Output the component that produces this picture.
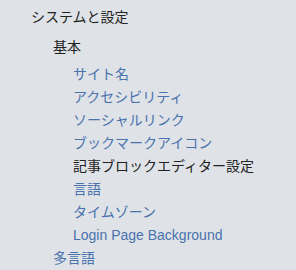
const links = [
    "サイト名",
    "アクセシビリティ",
    "ソーシャルリンク",
    "ブックマークアイコン",
    "記事ブロックエディター設定",
    "言語",
    "タイムゾーン",
    "Login Page Background",
];

// the active page is shown as plain text
const current = "記事ブロックエディター設定";

export default function App() {
    return (
        <div
            className="h-[270px] w-[296px] overflow-hidden bg-[#dfe3e7] text-[14px] leading-[23px] text-[#222]"
            style={{ fontFamily: '"Liberation Sans", "Noto Sans CJK JP", sans-serif' }}
        >
            <div className="pl-[31px] pt-[6px]">
                <p>システムと設定</p>
                <ul className="mt-[7px] pl-[22px]">
                    <li>
                        <p>基本</p>
                        <ul className="mt-[4px] pl-[20px]">
                            {links.map((label) => (
                                <li key={label}>
                                    {label === current ? (
                                        <span>{label}</span>
                                    ) : (
                                        <a href="#" className="text-[#4a72ad]">
                                            {label}
                                        </a>
                                    )}
                                </li>
                            ))}
                        </ul>
                    </li>
                    <li>
                        <a href="#" className="text-[#4a72ad]">
                            多言語
                        </a>
                    </li>
                </ul>
            </div>
        </div>
    );
}
